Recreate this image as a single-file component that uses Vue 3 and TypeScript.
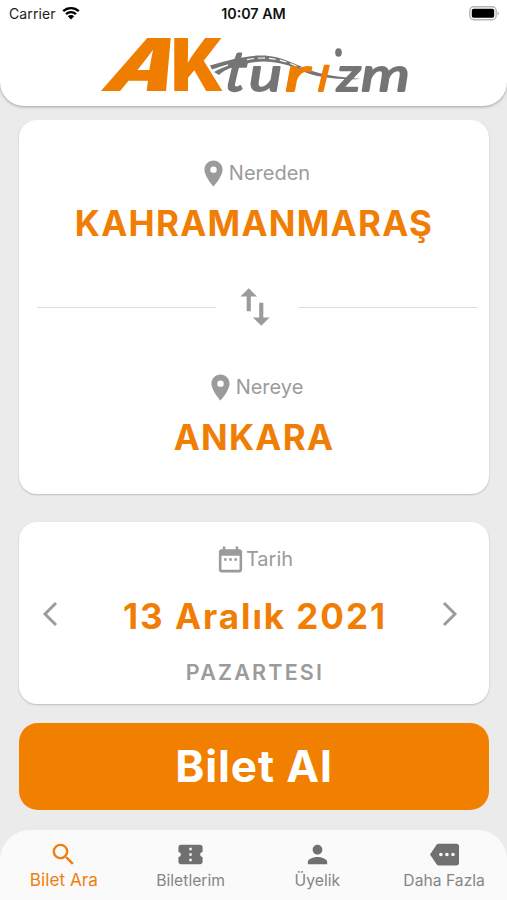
<script setup lang="ts">
interface Tab {
  label: string
  icon: string
  active?: boolean
}

const pin =
  'M12 2C8.13 2 5 5.13 5 9c0 5.25 7 13 7 13s7-7.75 7-13c0-3.87-3.13-7-7-7zm0 9.5a2.5 2.5 0 1 1 0-5 2.5 2.5 0 0 1 0 5z'

const tabs: Tab[] = [
  {
    label: 'Bilet Ara',
    active: true,
    icon: 'M15.5 14h-.79l-.28-.27A6.47 6.47 0 0 0 16 9.5 6.5 6.5 0 1 0 9.5 16c1.61 0 3.09-.59 4.23-1.57l.27.28v.79l5 4.99L20.49 19l-4.99-5zm-6 0C7.01 14 5 11.99 5 9.5S7.01 5 9.5 5 14 7.01 14 9.5 11.99 14 9.5 14z',
  },
  {
    label: 'Biletlerim',
    icon: 'M22 10V6c0-1.11-.9-2-2-2H4c-1.1 0-1.99.89-1.99 2v4c1.1 0 1.99.9 1.99 2s-.89 2-2 2v4c0 1.1.9 2 2 2h16c1.1 0 2-.9 2-2v-4c-1.1 0-2-.9-2-2s.9-2 2-2zm-9 7.5h-2v-2h2v2zm0-4.5h-2v-2h2v2zm0-4.5h-2v-2h2v2z',
  },
  {
    label: 'Üyelik',
    icon: 'M12 12c2.21 0 4-1.79 4-4s-1.79-4-4-4-4 1.79-4 4 1.79 4 4 4zm0 2c-2.67 0-8 1.34-8 4v2h16v-2c0-2.66-5.33-4-8-4z',
  },
  {
    label: 'Daha Fazla',
    icon: 'M22 3H7c-.69 0-1.23.35-1.59.88L0 12l5.41 8.11c.36.53.9.89 1.59.89h15c1.1 0 2-.9 2-2V5c0-1.1-.9-2-2-2zM9 13.5a1.5 1.5 0 1 1 0-3 1.5 1.5 0 0 1 0 3zm5 0a1.5 1.5 0 1 1 0-3 1.5 1.5 0 0 1 0 3zm5 0a1.5 1.5 0 1 1 0-3 1.5 1.5 0 0 1 0 3z',
  },
]
</script>

<template>
  <div class="screen">
    <header class="header">
      <div class="status">
        <div class="carrier">
          <span>Carrier</span>
          <svg class="wifi" viewBox="0 0 18 14">
            <path d="M1.2 5.2a11.2 11.2 0 0 1 15.6 0M4 8.2a7.2 7.2 0 0 1 10 0" fill="none" stroke="#000" stroke-width="2.3" />
            <path d="M9 13.6 5.8 10.3a4.6 4.6 0 0 1 6.4 0z" />
          </svg>
        </div>
        <span class="clock">10:07 AM</span>
        <svg class="battery" viewBox="0 0 31 15">
          <rect x=".8" y=".8" width="26.4" height="13" rx="4" fill="#fff" stroke="#b5b5b5" stroke-width="1.4" />
          <rect x="2.8" y="2.8" width="22.4" height="9" rx="1.8" />
          <path d="M28.6 5.2c1.9.8 1.9 3.4 0 4.2z" fill="#b5b5b5" />
        </svg>
      </div>
      <svg class="logo" viewBox="0 0 320 66">
        <g class="mark">
          <text transform="translate(2 60) skewX(-26)" textLength="69" lengthAdjust="spacingAndGlyphs">A</text>
          <text x="74" y="60" textLength="53" lengthAdjust="spacingAndGlyphs">K</text>
        </g>
        <path d="M113 34.5C135 28 155 23 172 25C190 27 204 37 222 42C234 45 246 46 263 48C242 49 217 46 205 40C188 32 172 28.5 155 31.5C140 34 128 38 122 44L117 41C124 37 135 33 144 31C134 32 125 35 115 38.5z" fill="#757575" />
        <path d="M150 28.6C172 24.5 187 29 205 37.5" fill="none" stroke="#fff" stroke-width="1.1" stroke-dasharray="7 4" />
        <g class="script">
          <text transform="translate(127 60) skewX(-6)" font-size="56" textLength="21" lengthAdjust="spacingAndGlyphs">t</text>
          <text x="152" y="60" textLength="33" lengthAdjust="spacingAndGlyphs">u</text>
          <text class="accent" x="188" y="60" textLength="25" lengthAdjust="spacingAndGlyphs">r</text>
          <text class="accent" transform="translate(220 60) skewX(-7)" font-size="50" textLength="11" lengthAdjust="spacingAndGlyphs">ı</text>
          <text x="240" y="60" textLength="24" lengthAdjust="spacingAndGlyphs">z</text>
          <text x="264" y="60" textLength="49" lengthAdjust="spacingAndGlyphs">m</text>
        </g>
        <ellipse cx="241.5" cy="21.5" rx="3.3" ry="4.3" fill="#757575" />
      </svg>
    </header>

    <main class="content">
      <section class="card route">
        <div class="label">
          <svg viewBox="0 0 24 24"><path :d="pin" /></svg><span>Nereden</span>
        </div>
        <div class="city">KAHRAMANMARAŞ</div>
        <div class="divider">
          <i></i>
          <svg viewBox="0 0 24 24">
            <path d="M16 17.01V10h-2v7.01h-3L15 21l4-3.99h-3zM9 3 5 6.99h3V14h2V6.99h3L9 3z" />
          </svg>
          <i></i>
        </div>
        <div class="label">
          <svg viewBox="0 0 24 24"><path :d="pin" /></svg><span>Nereye</span>
        </div>
        <div class="city">ANKARA</div>
      </section>

      <section class="card date">
        <div class="label">
          <svg viewBox="0 0 24 24">
            <path d="M9 11H7v2h2v-2zm4 0h-2v2h2v-2zm4 0h-2v2h2v-2zm2-7h-1V2h-2v2H8V2H6v2H5c-1.11 0-1.99.9-1.99 2L3 20c0 1.1.89 2 2 2h14c1.1 0 2-.9 2-2V6c0-1.1-.9-2-2-2zm0 16H5V9h14v11z" />
          </svg><span>Tarih</span>
        </div>
        <div class="day-row">
          <svg viewBox="0 0 16 26"><path d="M14 2 3 13l11 11" /></svg>
          <span class="day">13 Aralık 2021</span>
          <svg viewBox="0 0 16 26"><path d="m2 2 11 11L2 24" /></svg>
        </div>
        <div class="weekday">PAZARTESI</div>
      </section>

      <button class="buy" type="button">Bilet Al</button>
    </main>

    <nav class="tabs">
      <a v-for="tab in tabs" :key="tab.label" class="tab" :class="{ active: tab.active }">
        <svg viewBox="0 0 24 24"><path :d="tab.icon" /></svg>
        <span>{{ tab.label }}</span>
      </a>
    </nav>
  </div>
</template>

<style>
body {
  margin: 0;
}
</style>

<style scoped>
.screen {
  width: 507px;
  height: 900px;
  display: flex;
  flex-direction: column;
  background: #ebebeb;
  font-family: Inter, 'Liberation Sans', sans-serif;
  overflow: hidden;
}
svg {
  display: block;
  flex: none;
}
.header {
  height: 106px;
  flex: none;
  box-sizing: border-box;
  background: #fff;
  border-radius: 0 0 24px 24px;
  box-shadow: 0 1px 3px rgba(0, 0, 0, 0.32);
}
.status {
  height: 28px;
  padding: 0 7px 0 9px;
  display: grid;
  grid-template-columns: 1fr auto 1fr;
  align-items: center;
  font-size: 14px;
  line-height: 28px;
  color: #1c1c1c;
}
.carrier {
  display: flex;
  align-items: center;
  gap: 6px;
}
.carrier span {
  letter-spacing: 0.1px;
}
.wifi {
  width: 18px;
  height: 14px;
  margin-top: -2px;
}
.clock {
  font-weight: 600;
  font-size: 14.3px;
  margin-right: 2px;
  color: #111;
}
.battery {
  width: 31px;
  height: 15px;
  margin-top: -2px;
  justify-self: end;
}
.logo {
  width: 320px;
  height: 66px;
  margin: 3px 0 0 97px;
  overflow: visible;
}
.mark {
  font-family: Inter, sans-serif;
  font-weight: 900;
  font-size: 73px;
  fill: #ef7d00;
}
.script {
  font-family: Lato, sans-serif;
  font-style: italic;
  font-weight: 400;
  font-size: 46px;
  fill: #757575;
  stroke: #757575;
  stroke-width: 1.8;
  stroke-linejoin: round;
}
.script .accent {
  fill: #ef7d00;
  stroke: #ef7d00;
}
.content {
  padding: 14px 18px 0 19px;
  display: flex;
  flex-direction: column;
}
.card {
  box-sizing: border-box;
  background: #fff;
  border-radius: 18px;
  box-shadow: 0 1px 2px rgba(0, 0, 0, 0.2);
  display: flex;
  flex-direction: column;
  align-items: center;
}
.route {
  height: 374px;
  padding-top: 37px;
}
.label {
  display: flex;
  align-items: center;
  height: 32px;
  font-size: 20px;
  color: #9b9b9b;
}
.label svg {
  width: 31px;
  height: 31px;
  fill: #9b9b9b;
}
.city {
  height: 44px;
  margin-top: 12px;
  line-height: 44px;
  font-size: 35px;
  font-weight: 700;
  letter-spacing: 1.25px;
  color: #f07e05;
  white-space: nowrap;
}
.divider {
  align-self: stretch;
  height: 50px;
  margin: 37px 12px 39px 18px;
  display: flex;
  align-items: center;
  gap: 14px;
}
.divider i {
  flex: 1;
  height: 1px;
  background: #dedede;
}
.divider svg {
  width: 50px;
  height: 50px;
  margin-right: 5px;
  fill: #9b9b9b;
}
.date {
  height: 182px;
  margin-top: 28px;
  padding: 21px 31px 0 23px;
}
.date .label {
  margin-left: 8px;
}
.day-row {
  align-self: stretch;
  height: 44px;
  margin-top: 16px;
  display: grid;
  grid-template-columns: 16px 1fr 16px;
  align-items: center;
}
.day-row svg {
  width: 16px;
  height: 26px;
  fill: none;
  stroke: #9b9b9b;
  stroke-width: 2.9;
}
.day {
  margin: 4px -10px 0 0;
  text-align: center;
  white-space: nowrap;
  font-size: 35px;
  font-weight: 700;
  letter-spacing: 1.95px;
  color: #f07e05;
}
.weekday {
  margin: 22px 0 0 10px;
  line-height: 30px;
  font-size: 21.5px;
  font-weight: 600;
  letter-spacing: 2.2px;
  color: #9b9b9b;
}
.buy {
  height: 87px;
  margin: 19px 0 0;
  padding: 0;
  border: 0;
  border-radius: 19px;
  background: #f28000;
  color: #fff;
  font: 700 44px/87px Inter, sans-serif;
  letter-spacing: 0.9px;
}
.tabs {
  height: 70px;
  margin-top: auto;
  display: grid;
  grid-template-columns: repeat(4, 1fr);
  background: #fafafa;
  border-radius: 30px 30px 0 0;
}
.tab {
  display: flex;
  flex-direction: column;
  align-items: center;
  padding: 10px 0 0 1px;
  font-size: 15.7px;
  line-height: 20px;
  color: #858585;
}
.tab svg {
  width: 29px;
  height: 29px;
  fill: #707070;
}
.tab span {
  margin-top: 2px;
}
.active {
  color: #ef7f10;
  font-size: 17.2px;
}
.active svg {
  fill: #ef7f10;
}
.active span {
  margin-top: 1px;
}
</style>
